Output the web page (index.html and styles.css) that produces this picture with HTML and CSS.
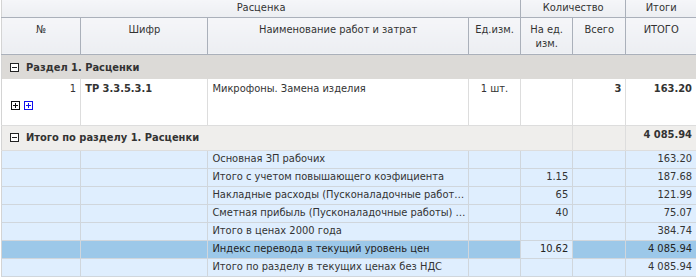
FILE: index.html
```html
<!DOCTYPE html>
<html lang="ru">
<head>
<meta charset="utf-8">
<link rel="stylesheet" href="styles.css">
</head>
<body>
<table class="grid">
  <colgroup>
    <col class="c1"><col class="c2"><col class="c3"><col class="c4"><col class="c5"><col class="c6"><col class="c7">
  </colgroup>
  <thead>
    <tr class="h1">
      <th colspan="4">Расценка</th>
      <th colspan="2">Количество</th>
      <th>Итоги</th>
    </tr>
    <tr class="h2">
      <th>№</th>
      <th>Шифр</th>
      <th>Наименование работ и затрат</th>
      <th>Ед.изм.</th>
      <th>На ед.<br>изм.</th>
      <th>Всего</th>
      <th>ИТОГО</th>
    </tr>
  </thead>
  <tbody>
    <tr class="section">
      <td colspan="7"><span class="tg"><svg width="9" height="9" viewBox="0 0 9 9"><rect x="0.5" y="0.5" width="8" height="8" fill="#fff" stroke="#222"/><path d="M2 4.5h5" stroke="#222"/></svg></span>Раздел 1. Расценки</td>
    </tr>
    <tr class="item">
      <td class="num">1
        <div class="icons">
          <svg width="9" height="9" viewBox="0 0 9 9"><rect x="0.5" y="0.5" width="8" height="8" fill="#fff" stroke="#111"/><path d="M2 4.5h5M4.5 2v5" stroke="#111"/></svg>
          <svg width="9" height="9" viewBox="0 0 9 9"><rect x="0.5" y="0.5" width="8" height="8" fill="#fff" stroke="#1010ee"/><path d="M2 4.5h5M4.5 2v5" stroke="#1010ee"/></svg>
        </div>
      </td>
      <td class="b">ТР 3.3.5.3.1</td>
      <td>Микрофоны. Замена изделия</td>
      <td class="ctr">1 шт.</td>
      <td></td>
      <td class="num b">3</td>
      <td class="num b">163.20</td>
    </tr>
    <tr class="total">
      <td colspan="5"><span class="tg"><svg width="9" height="9" viewBox="0 0 9 9"><rect x="0.5" y="0.5" width="8" height="8" fill="#fff" stroke="#222"/><path d="M2 4.5h5" stroke="#222"/></svg></span>Итого по разделу 1. Расценки</td>
      <td></td>
      <td class="num b">4 085.94</td>
    </tr>
    <tr class="d">
      <td></td><td></td><td>Основная ЗП рабочих</td><td></td><td></td><td></td><td class="num">163.20</td>
    </tr>
    <tr class="d">
      <td></td><td></td><td>Итого с учетом повышающего коэфициента</td><td></td><td class="num">1.15</td><td></td><td class="num">187.68</td>
    </tr>
    <tr class="d">
      <td></td><td></td><td>Накладные расходы (Пусконаладочные работ…</td><td></td><td class="num">65</td><td></td><td class="num">121.99</td>
    </tr>
    <tr class="d">
      <td></td><td></td><td>Сметная прибыль (Пусконаладочные работы) …</td><td></td><td class="num">40</td><td></td><td class="num">75.07</td>
    </tr>
    <tr class="d">
      <td></td><td></td><td>Итого в ценах 2000 года</td><td></td><td></td><td></td><td class="num">384.74</td>
    </tr>
    <tr class="d sel">
      <td></td><td></td><td>Индекс перевода в текущий уровень цен</td><td></td><td class="num light">10.62</td><td></td><td class="num">4 085.94</td>
    </tr>
    <tr class="d">
      <td></td><td></td><td>Итого по разделу в текущих ценах без НДС</td><td></td><td></td><td></td><td class="num">4 085.94</td>
    </tr>
  </tbody>
</table>
</body>
</html>
```

FILE: styles.css
```css
html, body {
  margin: 0;
  padding: 0;
  background: #ffffff;
}
body {
  padding-left: 1px;
  font-family: "DejaVu Sans Condensed", "DejaVu Sans", sans-serif;
  font-stretch: condensed;
  font-size: 11px;
  color: #333;
}
.grid {
  border-collapse: collapse;
  table-layout: fixed;
  width: 695px;
  border-left: 1px solid #d4d4d4;
}
.c1 { width: 79px; }
.c2 { width: 127px; }
.c3 { width: 260px; }
.c4 { width: 52px; }
.c5 { width: 52px; }
.c6 { width: 53px; }
.c7 { width: 70px; }

th, td {
  box-sizing: border-box;
}
th {
  font-weight: normal;
  color: #333;
  background: linear-gradient(#f5f6f9, #eceef2);
  border: 1px solid #aab0ba;
  border-top: none;
  padding: 0 3px;
  line-height: 14px;
}
.h1 th { height: 17px; vertical-align: middle; }
.h1 th:first-child { border-left: none; }
.h2 th { height: 37px; vertical-align: top; padding-top: 5px; }
.h2 th:first-child { border-left: none; }
.grid thead th:last-child { border-right: none; }

td {
  padding: 0 4px;
  line-height: 14px;
  white-space: nowrap;
  overflow: hidden;
}
.section td {
  background: #dcdad7;
  height: 25px;
  font-weight: bold;
  padding-left: 8px;
  padding-top: 2px;
  vertical-align: middle;
  color: #333;
}
.tg { display: inline-block; width: 9px; height: 9px; margin-right: 7px; vertical-align: -1px; }
.tg svg { display: block; }
.item td {
  background: #fff;
  height: 46px;
  vertical-align: top;
  padding-top: 3px;
  border: 1px solid #dddddd;
  border-top: none;
}
.item td:first-child { border-left: none; }
.item td:last-child { border-right: none; }
.icons {
  display: flex;
  gap: 4px;
  justify-content: flex-start;
  margin-top: 5px;
  margin-left: 5px;
}
.icons svg { display: block; }
.total td {
  background: #efeeec;
  height: 25px;
  border: 1px solid #dddddd;
  border-top: none;
  font-weight: bold;
  vertical-align: middle;
}
.total td:first-child { padding-left: 8px; border-left: none; }
.total td:last-child { border-right: none; vertical-align: top; padding-top: 2px; }
.d td {
  background: #dfeefe;
  height: 18px;
  border: 1px solid #d0d6dc;
  border-top: none;
  vertical-align: middle;
}
.d td:first-child { border-left: none; }
.d td:last-child { border-right: none; }
.d.sel td { background: #9cc8e9; color: #222; }
.d.sel td.light { background: #dfeefe; }
.num { text-align: right; }
.ctr { text-align: center; }
.b { font-weight: bold; }
```
